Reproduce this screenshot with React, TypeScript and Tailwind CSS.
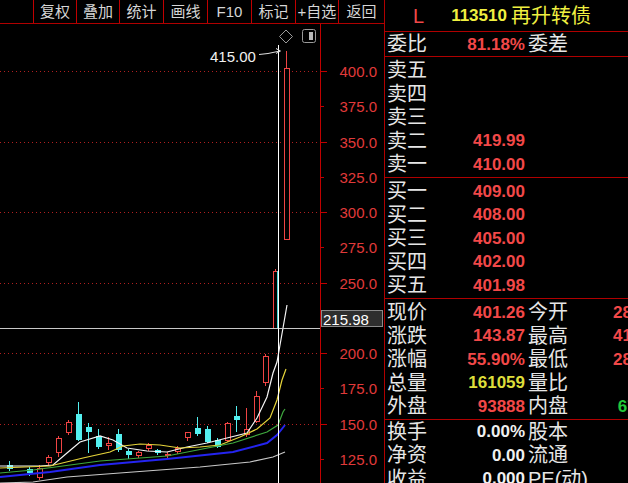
import React from 'react';

const FONT = "'Liberation Sans','Noto Sans CJK SC',sans-serif";

const tools = [
  { t: '复权', w: 'w-[43px]' },
  { t: '叠加', w: 'w-[43px]' },
  { t: '统计', w: 'w-[44px]' },
  { t: '画线', w: 'w-[44px]' },
  { t: 'F10', w: 'w-[44px]' },
  { t: '标记', w: 'w-[44px]' },
  { t: '+自选', w: 'w-[43px]' },
  { t: '返回', w: 'w-[46px]' },
];

// cx, bodyTop, bodyBottom, wickTop, wickBottom, up?
const candles: [number, number, number, number, number, boolean][] = [
  [9, 465, 469, 461, 471, false],
  [29, 469, 473, 467, 476, false],
  [39, 468, 478, 465, 480, true],
  [48, 457, 463, 455, 466, true],
  [58, 438, 453, 436, 457, true],
  [68, 422, 433, 420, 435, true],
  [78, 414, 440, 402, 441, false],
  [88, 427, 432, 423, 453, false],
  [98, 436, 447, 429, 449, false],
  [108, 443, 446, 437, 450, true],
  [118, 434, 450, 429, 452, false],
  [128, 451, 455, 449, 459, false],
  [138, 452, 456, 451, 458, true],
  [148, 445, 449, 443, 451, true],
  [157, 450, 453, 449, 455, false],
  [167, 454, 456, 452, 458, true],
  [177, 448, 452, 446, 454, true],
  [187, 432, 438, 432, 441, true],
  [197, 428, 434, 417, 436, false],
  [207, 429, 442, 426, 443, false],
  [217, 440, 447, 438, 448, false],
  [227, 423, 441, 422, 442, true],
  [236, 416, 420, 406, 432, false],
  [246, 429, 435, 408, 437, true],
  [256, 396, 422, 391, 423, true],
  [265, 356, 383, 354, 386, true],
  [275, 271, 329, 269, 329, true],
  [286, 68, 240, 51, 240, true],
];

const maLines = [
  {
    c: '#f4f4f4',
    w: 1.2,
    p: '0,466 20,466 40,466 53,465 67,453 80,442 100,436 113,440 127,448 147,451 167,452 187,447 207,443 227,438 247,433 257,418 267,397 273,373 277,362 280,345 283,328 287,305',
  },
  {
    c: '#e6d43a',
    w: 1.2,
    p: '0,468 50,466 83,458 110,452 123,446 140,444 160,445 180,448 200,447 220,445 240,437 257,429 270,418 277,400 282,380 286,369',
  },
  {
    c: '#3ea83e',
    w: 1.2,
    p: '0,473 33,470 100,461 167,456 233,443 267,432 278,425 283,412 285,409',
  },
  {
    c: '#2424f0',
    w: 2,
    p: '0,477 50,472 100,465 167,459 233,452 267,443 277,435 285,425',
  },
  {
    c: '#c8c8c8',
    w: 1.2,
    p: '0,483 33,482 67,477 133,472 200,467 250,462 273,457 285,452',
  },
];

const PY = (p: number) => 71 + (400 - p) * 1.41;
const levels = [400, 375, 350, 325, 300, 275, 250, 200, 175, 150, 125];

function Chart() {
  return (
    <svg width="384" height="459" viewBox="0 24 384 459" className="block">
      {levels
        .filter(p => p % 50 === 0)
        .map(p => (
          <line key={'d' + p} x1="0" x2="320" y1={Math.round(PY(p)) + 0.5} y2={Math.round(PY(p)) + 0.5} stroke="#b02020" strokeDasharray="1 3" />
        ))}

      {candles.map(([cx, bt, bb, wt, wb, up], i) =>
        up ? (
          <g key={i} stroke="#f04444" strokeWidth="1">
            <line x1={cx + 0.5} x2={cx + 0.5} y1={wt} y2={bt} />
            <line x1={cx + 0.5} x2={cx + 0.5} y1={bb} y2={wb} />
            <rect x={cx - 2 + 0.5} y={bt + 0.5} width="5" height={Math.max(bb - bt - 1, 1)} fill="#000" />
          </g>
        ) : (
          <g key={i}>
            <line x1={cx + 0.5} x2={cx + 0.5} y1={wt} y2={wb} stroke="#54f0f0" />
            <rect x={cx - 2} y={bt} width="6" height={Math.max(bb - bt, 2)} fill="#54f0f0" />
          </g>
        )
      )}

      {maLines.map((m, i) => (
        <polyline key={i} points={m.p} fill="none" stroke={m.c} strokeWidth={m.w} />
      ))}

      {/* cross hair */}
      <line x1="0" x2="321" y1="328.5" y2="328.5" stroke="#c8c8c8" />
      <line x1="278.5" x2="278.5" y1="45" y2="483" stroke="#ffffff" />
      <line x1="277.5" x2="277.5" y1="271" y2="328" stroke="#40d0d0" />

      {/* top icons */}
      <polygon points="286,30 292.5,36.5 286,43 279.5,36.5" fill="none" stroke="#9a9a9a" />
      <rect x="302.5" y="29.5" width="13" height="13" rx="2" fill="none" stroke="#9a9a9a" />
      <rect x="309" y="32" width="4" height="8" fill="#b8b8b8" />

      {/* high mark */}
      <text x="210" y="56" fontSize="15" fill="#f0f0f0" fontFamily={FONT} dominantBaseline="central">
        415.00
      </text>
      <polyline points="259,54.5 268,53.5 280,51" fill="none" stroke="#e0e0e0" />
      <polyline points="276,48.5 280.5,51 276,53.5" fill="none" stroke="#e0e0e0" />

      {/* axis */}
      <line x1="320.5" x2="320.5" y1="24" y2="483" stroke="#c00000" />
      {levels.map(p => {
        const y = Math.round(PY(p)) + 0.5;
        return (
          <g key={'a' + p}>
            <line x1="321" x2={p % 50 === 0 ? 327 : 324} y1={y} y2={y} stroke="#c00000" />
            <text x="377" y={y} fontSize="15" fill="#e03a3a" textAnchor="end" dominantBaseline="central" fontFamily={FONT}>
              {p.toFixed(1)}
            </text>
          </g>
        );
      })}

      <rect x="321.5" y="310.5" width="61" height="16" fill="#2e2e2e" stroke="#8a8a8a" />
      <text x="323" y="319" fontSize="15" fill="#ffffff" dominantBaseline="central" fontFamily={FONT}>
        215.98
      </text>
    </svg>
  );
}

type Cell = { v?: string; c?: string };

function Row({ l1, v1, l2, v2 }: { l1: string; v1?: Cell; l2?: string; v2?: Cell }) {
  return (
    <div className="h-[23.5px] flex items-center shrink-0">
      <span className="w-[40px] shrink-0 text-[20px] leading-none text-[#e6e6e6]">{l1}</span>
      <span className={`w-[98px] shrink-0 text-right text-[17px] font-bold leading-none ${v1?.c ?? ''}`}>{v1?.v}</span>
      <span className="w-[40px] ml-[3px] shrink-0 text-[20px] leading-none text-[#e6e6e6] whitespace-nowrap">{l2}</span>
      <span className={`w-[97px] shrink-0 text-right text-[17px] font-bold leading-none ${v2?.c ?? ''}`}>{v2?.v}</span>
    </div>
  );
}

const RED = 'text-[#f24848]';
const YEL = 'text-[#dede3a]';
const GRN = 'text-[#22c83a]';
const WHT = 'text-[#f0f0f0]';

export default function App() {
  return (
    <div className="w-[628px] h-[483px] bg-black flex overflow-hidden" style={{ fontFamily: FONT }}>
      <div className="w-[384px] shrink-0 flex flex-col">
        <div className="h-[24px] flex border-b border-[#b00000] shrink-0">
          <div className="w-[33px] shrink-0" />
          {tools.map(b => (
            <div key={b.t} className={`${b.w} shrink-0 border-l border-[#c00000] flex items-center justify-center text-[15px] leading-none text-[#d6d6d6]`}>
              {b.t}
            </div>
          ))}
        </div>
        <Chart />
      </div>

      <div className="w-[244px] shrink-0 border-l border-[#b00000] flex flex-col overflow-hidden">
        <div className="h-[32px] border-b border-[#b00000] flex items-center shrink-0">
          <span className="ml-[28px] text-[20px] leading-none text-[#f04848]">L</span>
          <span className="ml-[27px] text-[17px] font-bold leading-none text-[#f0f040]">113510</span>
          <span className="ml-[4px] text-[20px] leading-none text-[#f0f040]">再升转债</span>
        </div>
        <div className="h-[25px] border-b border-[#b00000] flex items-center pl-[2px] shrink-0">
          <Row l1="委比" v1={{ v: '81.18%', c: RED }} l2="委差" />
        </div>
        <div className="h-[121px] border-b border-[#b00000] flex flex-col justify-center pl-[2px] shrink-0">
          <Row l1="卖五" />
          <Row l1="卖四" />
          <Row l1="卖三" />
          <Row l1="卖二" v1={{ v: '419.99', c: RED }} />
          <Row l1="卖一" v1={{ v: '410.00', c: RED }} />
        </div>
        <div className="h-[121px] border-b border-[#b00000] flex flex-col justify-center pl-[2px] shrink-0">
          <Row l1="买一" v1={{ v: '409.00', c: RED }} />
          <Row l1="买二" v1={{ v: '408.00', c: RED }} />
          <Row l1="买三" v1={{ v: '405.00', c: RED }} />
          <Row l1="买四" v1={{ v: '402.00', c: RED }} />
          <Row l1="买五" v1={{ v: '401.98', c: RED }} />
        </div>
        <div className="h-[121px] border-b border-[#b00000] flex flex-col justify-center pl-[2px] shrink-0">
          <Row l1="现价" v1={{ v: '401.26', c: RED }} l2="今开" v2={{ v: '280.00', c: RED }} />
          <Row l1="涨跌" v1={{ v: '143.87', c: RED }} l2="最高" v2={{ v: '415.00', c: RED }} />
          <Row l1="涨幅" v1={{ v: '55.90%', c: RED }} l2="最低" v2={{ v: '280.00', c: RED }} />
          <Row l1="总量" v1={{ v: '161059', c: YEL }} l2="量比" v2={{ v: '', c: WHT }} />
          <Row l1="外盘" v1={{ v: '93888', c: RED }} l2="内盘" v2={{ v: '67171', c: GRN }} />
        </div>
        <div className="flex flex-col pl-[2px] shrink-0">
          <Row l1="换手" v1={{ v: '0.00%', c: WHT }} l2="股本" />
          <Row l1="净资" v1={{ v: '0.00', c: WHT }} l2="流通" />
          <Row l1="收益" v1={{ v: '0.000', c: WHT }} l2="PE(动)" />
        </div>
      </div>
    </div>
  );
}
